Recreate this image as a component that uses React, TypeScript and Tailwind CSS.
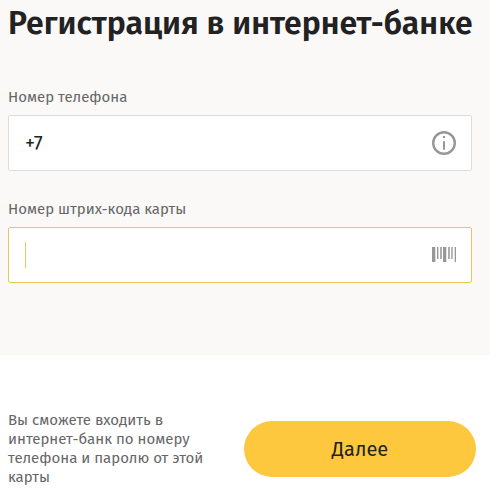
import { useState } from 'react'
import type { ReactNode } from 'react'

const InfoIcon = () => (
  <svg width="24" height="24" viewBox="0 0 24 24" fill="none" aria-hidden="true">
    <circle cx="12" cy="12" r="10.8" stroke="#979797" strokeWidth="2.4" />
    <rect x="11" y="5" width="2" height="2" fill="#979797" />
    <rect x="11" y="10" width="2" height="9" rx="1" fill="#979797" />
  </svg>
)

const BarcodeIcon = () => (
  <svg width="24" height="16" viewBox="0 0 24 16" fill="#979797" aria-hidden="true">
    <rect x="0" y="0" width="3" height="15" />
    <rect x="3" y="0" width="1" height="15" opacity="0.3" />
    <rect x="5" y="0" width="1" height="12" />
    <rect x="6" y="0" width="1" height="12" opacity="0.4" />
    <rect x="8" y="0" width="2" height="12" opacity="0.8" />
    <rect x="11" y="0" width="3" height="15" />
    <rect x="14" y="0" width="1" height="15" opacity="0.3" />
    <rect x="16" y="0" width="2" height="12" opacity="0.8" />
    <rect x="19" y="0" width="2" height="12" opacity="0.7" />
    <rect x="22" y="0" width="1" height="15" opacity="0.3" />
    <rect x="23" y="0" width="1" height="15" />
  </svg>
)

interface FieldProps {
  id: string
  label: string
  value: string
  onChange: (value: string) => void
  icon: ReactNode
  active?: boolean
}

const Field = ({ id, label, value, onChange, icon, active }: FieldProps) => {
  return (
    <div>
      <label htmlFor={id} className="block text-[15px] leading-5 text-[#666666]">
        {label}
      </label>
      <div
        className={`relative mt-2 flex h-14 items-center rounded-xs border bg-white pr-[15px] pl-4 ${active ? 'border-[#e8c658]' : 'border-[#dcdcdf]'}`}
      >
        <input
          id={id}
          type="text"
          inputMode="numeric"
          className="h-full min-w-0 flex-1 bg-transparent text-xl text-[#222222] caret-[#e8c658] outline-none"
          value={value}
          onChange={(e) => onChange(e.target.value)}
        />
        {active && !value && (
          <span className="pointer-events-none absolute left-4 h-[26px] border-l border-[#e8c658]" />
        )}
        {icon}
      </div>
    </div>
  )
}

const App = () => {
  const [phone, setPhone] = useState('+7')
  const [barcode, setBarcode] = useState('')

  return (
    <form
      className="min-h-screen bg-white font-['Fira_Sans','Noto_Sans',sans-serif]"
      onSubmit={(e) => e.preventDefault()}
    >
      <div className="bg-[#faf9f8] pr-[18px] pb-[72px] pl-2">
        <h1 className="pt-[3px] text-[32px] leading-10 font-semibold whitespace-nowrap text-[#222222]">
          Регистрация в интернет-банке
        </h1>
        <div className="flex flex-col gap-7 pt-11">
          <Field
            id="phone"
            label="Номер телефона"
            value={phone}
            onChange={setPhone}
            icon={<InfoIcon />}
          />
          <Field
            id="barcode"
            label="Номер штрих-кода карты"
            value={barcode}
            onChange={setBarcode}
            icon={<BarcodeIcon />}
            active
          />
        </div>
      </div>
      <div className="flex items-center gap-9 pt-14 pr-[14px] pl-2">
        <p className="min-w-0 flex-1 text-[15px] leading-[19px] text-[#666666]">
          Вы сможете входить в интернет-банк по номеру телефона и паролю от этой
          карты
        </p>
        <button
          type="submit"
          className="h-14 w-1/2 max-w-[232px] rounded-full bg-[#fdc83e] text-xl text-[#222222]"
        >
          Далее
        </button>
      </div>
    </form>
  )
}

export default App
